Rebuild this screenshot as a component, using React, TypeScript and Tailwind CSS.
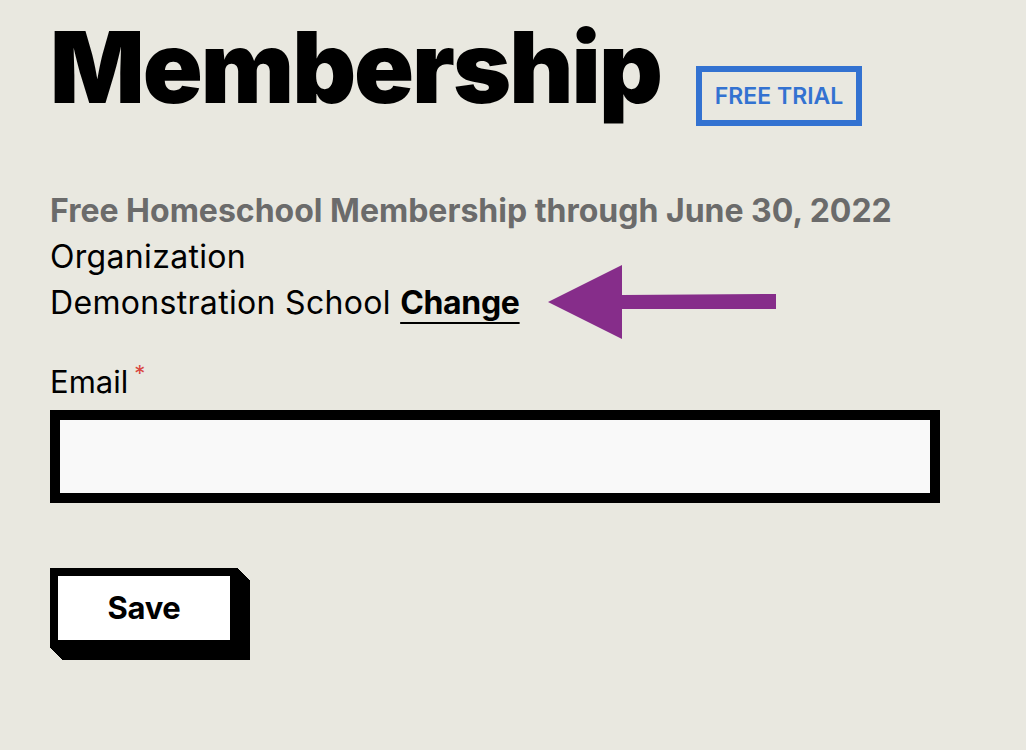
export default function App() {
  return (
    <div className="min-h-[750px] w-full bg-[#e9e8e0] text-black font-['Inter',sans-serif] px-[50px] pt-[12px]">
      <div className="flex items-start">
        <h1 className="text-[99px] leading-[110px] font-black tracking-[-0.02em]">Membership</h1>
        <span className="ml-[35px] mt-[54px] border-[6px] border-[#3372d1] px-[13px] py-[8px] text-[23px] leading-[32px] font-semibold text-[#3372d1]">
          FREE TRIAL
        </span>
      </div>

      <div className="mt-[62px] text-[32px] leading-[46px] tracking-[0.01em]">
        <p className="font-bold text-[#6b6b6b] tracking-normal">Free Homeschool Membership through June 30, 2022</p>
        <p>Organization</p>
        <div className="flex items-center">
          <p>
            Demonstration School{" "}
            <a href="#" className="font-bold tracking-[-0.01em] underline decoration-2 underline-offset-[8px]">Change</a>
          </p>
          <svg width="232" height="76" viewBox="0 0 232 76" className="-my-[15px] ml-[28px]">
            <polygon points="0,37 74,0 74,30 228,29 228,44 74,44 74,74" fill="#862d8a" />
          </svg>
        </div>
      </div>

      <div className="mt-[36px]">
        <label className="flex items-start text-[31px] leading-[40px]">
          Email
          <span className="ml-[6px] text-[22px] leading-[22px] text-[#d9473f]">*</span>
        </label>
        <input type="email" className="mt-[8px] block w-[890px] h-[93px] border-[10px] border-black bg-[#f9f9f9] outline-none" />
      </div>

      <button className="mt-[65px] w-[188px] h-[80px] border-[8px] border-black bg-white text-[31px] font-bold tracking-[-0.01em] shadow-[1px_1px_0_#000,2px_2px_0_#000,3px_3px_0_#000,4px_4px_0_#000,5px_5px_0_#000,6px_6px_0_#000,7px_7px_0_#000,8px_8px_0_#000,9px_9px_0_#000,10px_10px_0_#000,11px_11px_0_#000,12px_12px_0_#000]">
        Save
      </button>
    </div>
  );
}
